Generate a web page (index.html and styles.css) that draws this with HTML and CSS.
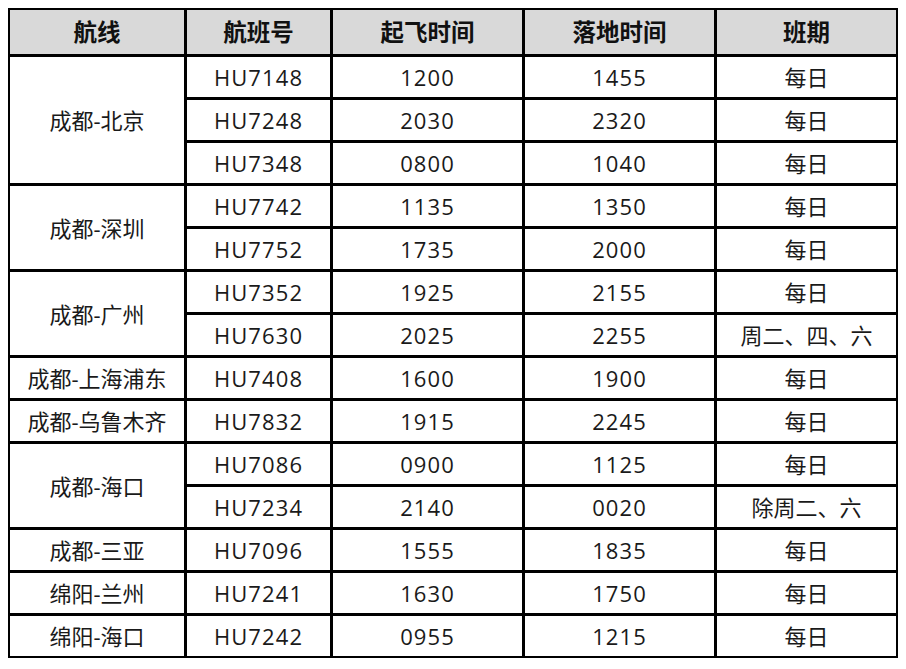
FILE: index.html
```html
<!DOCTYPE html>
<html lang="zh-CN">
<head>
<meta charset="utf-8">
<title>航班时刻表</title>
<link rel="stylesheet" href="styles.css">
</head>
<body>
<table class="schedule">
  <colgroup>
    <col class="c-route">
    <col class="c-flight">
    <col class="c-dep">
    <col class="c-arr">
    <col class="c-days">
  </colgroup>
  <thead>
    <tr class="head">
      <th>航线</th><th>航班号</th><th>起飞时间</th><th>落地时间</th><th>班期</th>
    </tr>
  </thead>
  <tbody>
    <tr><td rowspan="3">成都-北京</td><td class="num">HU7148</td><td class="num">1200</td><td class="num">1455</td><td>每日</td></tr>
    <tr><td class="num">HU7248</td><td class="num">2030</td><td class="num">2320</td><td>每日</td></tr>
    <tr><td class="num">HU7348</td><td class="num">0800</td><td class="num">1040</td><td>每日</td></tr>
    <tr><td rowspan="2">成都-深圳</td><td class="num">HU7742</td><td class="num">1135</td><td class="num">1350</td><td>每日</td></tr>
    <tr><td class="num">HU7752</td><td class="num">1735</td><td class="num">2000</td><td>每日</td></tr>
    <tr><td rowspan="2">成都-广州</td><td class="num">HU7352</td><td class="num">1925</td><td class="num">2155</td><td>每日</td></tr>
    <tr><td class="num">HU7630</td><td class="num">2025</td><td class="num">2255</td><td>周二、四、六</td></tr>
    <tr><td>成都-上海浦东</td><td class="num">HU7408</td><td class="num">1600</td><td class="num">1900</td><td>每日</td></tr>
    <tr><td>成都-乌鲁木齐</td><td class="num">HU7832</td><td class="num">1915</td><td class="num">2245</td><td>每日</td></tr>
    <tr><td rowspan="2">成都-海口</td><td class="num">HU7086</td><td class="num">0900</td><td class="num">1125</td><td>每日</td></tr>
    <tr><td class="num">HU7234</td><td class="num">2140</td><td class="num">0020</td><td>除周二、六</td></tr>
    <tr><td>成都-三亚</td><td class="num">HU7096</td><td class="num">1555</td><td class="num">1835</td><td>每日</td></tr>
    <tr><td>绵阳-兰州</td><td class="num">HU7241</td><td class="num">1630</td><td class="num">1750</td><td>每日</td></tr>
    <tr><td>绵阳-海口</td><td class="num">HU7242</td><td class="num">0955</td><td class="num">1215</td><td>每日</td></tr>
  </tbody>
</table>
</body>
</html>
```

FILE: styles.css
```css
html, body {
  background: #ffffff;
}
body {
  margin: 8px;
  font-family: "Open Sans", "Noto Sans CJK SC", sans-serif;
  color: #1a1a1a;
}
.schedule {
  border-collapse: separate;
  border-spacing: 0;
  table-layout: fixed;
  width: 890px;
  border: 2px solid #000;
}
.c-route { width: 177px; }
.c-flight { width: 146px; }
.c-dep { width: 192px; }
.c-arr { width: 192px; }
.c-days { width: 179px; }
.schedule th,
.schedule td {
  border: 0;
  border-right: 3px solid #000;
  border-bottom: 3px solid #000;
  text-align: center;
  vertical-align: middle;
  padding: 0;
  font-size: 22px;
  line-height: 1;
  white-space: nowrap;
}
.schedule tr > :last-child {
  border-right: 0;
}
.schedule tbody tr:last-child td {
  border-bottom: 0;
}
.schedule th {
  background: #d9d9d9;
  font-family: "Noto Sans CJK SC", sans-serif;
  font-weight: 700;
  font-size: 23.5px;
  color: #111;
}
.schedule .num {
  letter-spacing: 1.1px;
}
.schedule .head {
  height: 47px;
}
.schedule tbody tr {
  height: 43px;
}
.schedule tbody tr:last-child {
  height: 40px;
}
```
